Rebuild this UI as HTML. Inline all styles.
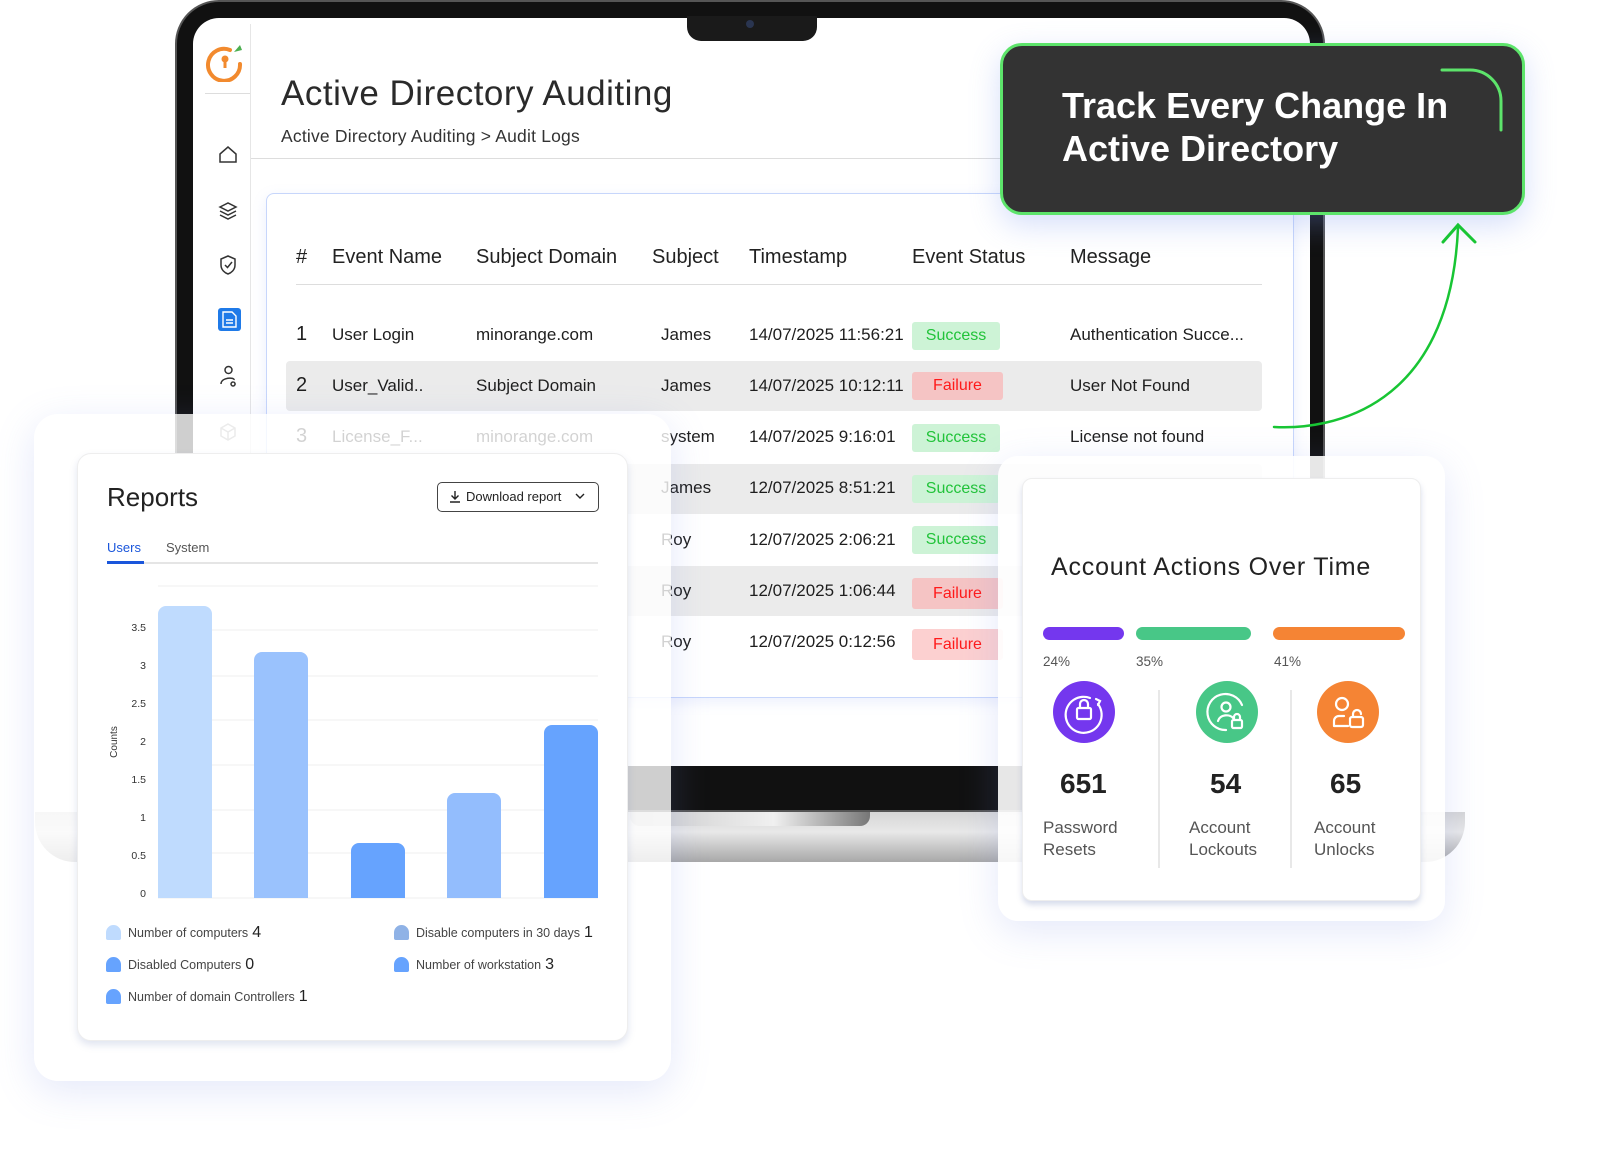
<!DOCTYPE html>
<html><head><meta charset="utf-8"><style>
*{margin:0;padding:0;box-sizing:border-box}
body{width:1599px;height:1150px;background:#fff;position:relative;overflow:hidden;font-family:"Liberation Sans",sans-serif;color:#222}
.a{position:absolute}
.t{position:absolute;white-space:nowrap}
.row{position:absolute;left:286px;width:976px;height:50px;background:#ebebeb;border-radius:4px}
.cell{position:absolute;font-size:17px;color:#1e1e1e;white-space:nowrap}
.b{position:absolute;left:912px;height:28px;border-radius:3px;font-size:16px;text-align:center;line-height:28px}
.s{width:88px;background:#cdf3d6;color:#22c33a}
.f{width:91px;background:#f5c4c4;color:#ff1a1a}
.leg{position:absolute;font-size:12.5px;color:#444;white-space:nowrap}
.leg i{display:inline-block;width:15px;height:15px;border-radius:8px 8px 2px 2px;vertical-align:-3px;margin-right:7px}
.leg b{font-weight:normal;font-size:16px;color:#222;margin-left:4px}
</style></head><body>

<!-- laptop base -->
<div class="a" style="left:35px;top:812px;width:1430px;height:50px;border-radius:0 0 40px 40px;background:linear-gradient(#d6d6d6,#e8e8e8 40%,#a8a8a8)"></div>
<div class="a" style="left:630px;top:812px;width:240px;height:14px;border-radius:0 0 10px 10px;background:linear-gradient(90deg,#c8c8c8,#f0f0f0 60%,#777)"></div>
<div class="a" style="left:175px;top:0;width:1150px;height:812px;border-radius:44px 44px 0 0;background:#111;border:2px solid #555"></div>
<div class="a" style="left:193px;top:18px;width:1117px;height:748px;border-radius:26px 26px 0 0;background:#fff"></div>
<div class="a" style="left:687px;top:16px;width:130px;height:25px;border-radius:0 0 14px 14px;background:#1a1a1a"></div>
<div class="a" style="left:746px;top:20px;width:8px;height:8px;border-radius:4px;background:#2a3550"></div>

<!-- sidebar -->
<div class="a" style="left:250px;top:24px;width:1px;height:742px;background:#e6e6e6"></div>
<div class="a" style="left:205px;top:93px;width:45px;height:1px;background:#ddd"></div>
<svg class="a" style="left:204px;top:42px" width="42" height="40" viewBox="0 0 42 40"><path d="M26 8 A16 16 0 1 0 36 22" fill="none" stroke="#f28a2e" stroke-width="4" stroke-linecap="round"/><circle cx="21" cy="17" r="3.5" fill="#f28a2e"/><rect x="19.5" y="18" width="3" height="8" fill="#f28a2e"/><path d="M30 10 L36 3 L38 8 Z" fill="#4caf50"/></svg>
<svg class="a" style="left:217px;top:144px" width="22" height="300" viewBox="0 0 22 300" fill="none" stroke="#333" stroke-width="1.5">
<path d="M3 10 L11 3 L19 10 V18 H3 Z"/>
<path d="M3 63 L11 59 L19 63 L11 67 Z M3 67 L11 71 L19 67 M3 71 L11 75 L19 71"/>
<path d="M11 112 L18 115 V121 C18 126 14 129 11 130 C8 129 4 126 4 121 V115 Z M8 121 L10.5 123.5 L15 118"/>
<path d="M8 226 a3.5 3.5 0 1 0 7 0 a3.5 3.5 0 1 0 -7 0 M4 240 C4 233 18 233 17 236 M16 238 a2 2 0 1 0 0.1 0"/>
<path d="M11 280 L18 284 V292 L11 296 L4 292 V284 Z M4 284 L11 288 L18 284 M11 288 V296" stroke="#999"/>
</svg>
<div class="a" style="left:218px;top:308px;width:23px;height:23px;border-radius:3px;background:#1f7ae8"></div>
<svg class="a" style="left:222px;top:311px" width="15" height="17" viewBox="0 0 15 17" fill="none" stroke="#fff" stroke-width="1.4"><path d="M1 1 H10 L14 5 V16 H1 Z M4 9 H11 M4 12 H11"/></svg>

<!-- header -->
<div class="t" style="left:281px;top:74px;font-size:35px;color:#2a2a2a;letter-spacing:0.5px">Active Directory Auditing</div>
<div class="t" style="left:281px;top:126px;font-size:17.5px;color:#333;letter-spacing:0.2px">Active Directory Auditing &gt; Audit Logs</div>
<div class="a" style="left:251px;top:158px;width:1059px;height:1px;background:#ddd"></div>

<!-- table card -->
<div class="a" style="left:266px;top:193px;width:1028px;height:505px;border:1.5px solid #c7d6fb;border-radius:8px;background:#fff;box-shadow:0 4px 14px rgba(120,150,240,.15)"></div>
<div class="t" style="left:296px;top:246px;font-size:20px">#</div>
<div class="t" style="left:332px;top:246px;font-size:20px">Event Name</div>
<div class="t" style="left:476px;top:246px;font-size:20px">Subject Domain</div>
<div class="t" style="left:652px;top:246px;font-size:20px">Subject</div>
<div class="t" style="left:749px;top:246px;font-size:20px">Timestamp</div>
<div class="t" style="left:912px;top:246px;font-size:20px">Event Status</div>
<div class="t" style="left:1070px;top:246px;font-size:20px">Message</div>
<div class="a" style="left:296px;top:284px;width:966px;height:1px;background:#ddd"></div>

<div class="row" style="top:361px"></div>
<div class="row" style="top:464px"></div>
<div class="row" style="top:566px"></div>

<div class="cell" style="left:296px;top:323px;font-size:20px">1</div>
<div class="cell" style="left:332px;top:325px">User Login</div>
<div class="cell" style="left:476px;top:325px">minorange.com</div>
<div class="cell" style="left:661px;top:325px">James</div>
<div class="cell" style="left:749px;top:325px">14/07/2025 11:56:21</div>
<div class="b s" style="top:322px">Success</div>
<div class="cell" style="left:1070px;top:325px">Authentication Succe...</div>

<div class="cell" style="left:296px;top:374px;font-size:20px">2</div>
<div class="cell" style="left:332px;top:376px">User_Valid..</div>
<div class="cell" style="left:476px;top:376px">Subject Domain</div>
<div class="cell" style="left:661px;top:376px">James</div>
<div class="cell" style="left:749px;top:376px">14/07/2025 10:12:11</div>
<div class="b f" style="top:372px">Failure</div>
<div class="cell" style="left:1070px;top:376px">User Not Found</div>

<div class="cell" style="left:296px;top:425px;font-size:20px">3</div>
<div class="cell" style="left:332px;top:427px">License_F...</div>
<div class="cell" style="left:476px;top:427px">minorange.com</div>
<div class="cell" style="left:661px;top:427px">system</div>
<div class="cell" style="left:749px;top:427px">14/07/2025 9:16:01</div>
<div class="b s" style="top:424px">Success</div>
<div class="cell" style="left:1070px;top:427px">License not found</div>

<div class="cell" style="left:661px;top:478px">James</div>
<div class="cell" style="left:749px;top:478px">12/07/2025 8:51:21</div>
<div class="b s" style="top:475px">Success</div>
<div class="cell" style="left:661px;top:530px">Roy</div>
<div class="cell" style="left:749px;top:530px">12/07/2025 2:06:21</div>
<div class="b s" style="top:526px">Success</div>
<div class="cell" style="left:661px;top:581px">Roy</div>
<div class="cell" style="left:749px;top:581px">12/07/2025 1:06:44</div>
<div class="b f" style="top:578px;height:31px;line-height:31px">Failure</div>
<div class="cell" style="left:661px;top:632px">Roy</div>
<div class="cell" style="left:749px;top:632px">12/07/2025 0:12:56</div>
<div class="b f" style="top:629px;height:31px;line-height:31px;background:#fcd0d0">Failure</div>

<!-- callout -->
<div class="a" style="left:1000px;top:43px;width:525px;height:172px;border-radius:22px;background:#333;border:3px solid #5de46b;box-shadow:0 10px 30px rgba(120,150,240,.3)"></div>
<div class="t" style="left:1062px;top:84px;font-size:36px;font-weight:bold;color:#fff;line-height:43px">Track Every Change In<br>Active Directory</div>
<svg class="a" style="left:1260px;top:60px" width="260" height="380" viewBox="1260 60 260 380" fill="none" stroke-linecap="round">
<path d="M1442 70 H1470 A31 31 0 0 1 1501 101 V130" stroke="#5de46b" stroke-width="3"/>
<path d="M1274 427 C1330 430 1450 410 1458 228" stroke="#18c534" stroke-width="2.5"/>
<path d="M1443 242 L1458 225 L1475 242" stroke="#18c534" stroke-width="3"/>
</svg>

<!-- left panel -->
<div class="a" style="left:34px;top:414px;width:637px;height:667px;border-radius:24px;background:rgba(255,255,255,.8);box-shadow:0 10px 40px rgba(120,140,230,.2)"></div>
<div class="a" style="left:77px;top:453px;width:551px;height:588px;border-radius:14px;background:#fff;border:1px solid #eee;box-shadow:0 4px 8px rgba(100,120,180,.2)"></div>
<div class="t" style="left:107px;top:482px;font-size:26px;color:#222">Reports</div>
<div class="a" style="left:437px;top:482px;width:162px;height:30px;border:1.5px solid #444;border-radius:5px;font-size:13px;color:#222;line-height:27px;padding-left:28px;white-space:nowrap">Download report</div>
<svg class="a" style="left:449px;top:489px" width="150" height="16" fill="none" stroke="#222" stroke-width="1.4"><path d="M6 2 V10 M2.5 6.5 L6 10 L9.5 6.5 M1 13 H11"/><path d="M127 5 L131 9 L135 5"/></svg>
<div class="t" style="left:107px;top:540px;font-size:13px;color:#1a56db">Users</div>
<div class="t" style="left:166px;top:540px;font-size:13px;color:#555">System</div>
<div class="a" style="left:107px;top:562px;width:491px;height:1.5px;background:#e5e5e5"></div>
<div class="a" style="left:107px;top:561px;width:37px;height:3px;background:#1a56db"></div>

<svg class="a" style="left:100px;top:580px" width="510" height="325" viewBox="100 580 510 325">
<g stroke="#efefef" stroke-width="1"><line x1="158" y1="586" x2="598" y2="586"/><line x1="158" y1="630" x2="598" y2="630"/><line x1="158" y1="676" x2="598" y2="676"/><line x1="158" y1="720" x2="598" y2="720"/><line x1="158" y1="765" x2="598" y2="765"/><line x1="158" y1="810" x2="598" y2="810"/><line x1="158" y1="853" x2="598" y2="853"/><line x1="158" y1="898" x2="598" y2="898"/></g>
<g font-size="10.5" fill="#333" text-anchor="end" font-family="Liberation Sans"><text x="146" y="631">3.5</text><text x="146" y="669">3</text><text x="146" y="707">2.5</text><text x="146" y="745">2</text><text x="146" y="783">1.5</text><text x="146" y="821">1</text><text x="146" y="859">0.5</text><text x="146" y="897">0</text></g>
<text x="117" y="742" font-size="10" fill="#333" transform="rotate(-90 117 742)" text-anchor="middle" font-family="Liberation Sans">Counts</text>
<path d="M158 898 V614 a8 8 0 0 1 8 -8 H204 a8 8 0 0 1 8 8 V898 Z" fill="#bfdbfe"/>
<path d="M254 898 V660 a8 8 0 0 1 8 -8 H300 a8 8 0 0 1 8 8 V898 Z" fill="#9ac2fd"/>
<path d="M351 898 V851 a8 8 0 0 1 8 -8 H397 a8 8 0 0 1 8 8 V898 Z" fill="#66a3fe"/>
<path d="M447 898 V801 a8 8 0 0 1 8 -8 H493 a8 8 0 0 1 8 8 V898 Z" fill="#93bdfd"/>
<path d="M544 898 V733 a8 8 0 0 1 8 -8 H590 a8 8 0 0 1 8 8 V898 Z" fill="#66a3fe"/>
</svg>
<div class="leg" style="left:106px;top:924px"><i style="background:#bfdbfe"></i>Number of computers<b>4</b></div>
<div class="leg" style="left:394px;top:924px"><i style="background:#8fb2e6"></i>Disable computers in 30 days<b>1</b></div>
<div class="leg" style="left:106px;top:956px"><i style="background:#66a3fe"></i>Disabled Computers<b>0</b></div>
<div class="leg" style="left:394px;top:956px"><i style="background:#66a3fe"></i>Number of workstation<b>3</b></div>
<div class="leg" style="left:106px;top:988px"><i style="background:#66a3fe"></i>Number of domain Controllers<b>1</b></div>

<!-- right panel -->
<div class="a" style="left:998px;top:456px;width:447px;height:465px;border-radius:20px;background:rgba(255,255,255,.9);box-shadow:0 10px 40px rgba(120,140,230,.2)"></div>
<div class="a" style="left:1022px;top:478px;width:399px;height:423px;border-radius:10px;background:#fff;border:1px solid #eee;box-shadow:0 4px 6px rgba(100,120,180,.25)"></div>
<div class="t" style="left:1051px;top:553px;font-size:25px;color:#222;letter-spacing:0.8px">Account Actions Over Time</div>
<div class="a" style="left:1043px;top:627px;width:81px;height:13px;border-radius:7px;background:#7437ee"></div>
<div class="a" style="left:1136px;top:627px;width:115px;height:13px;border-radius:7px;background:#48c787"></div>
<div class="a" style="left:1273px;top:627px;width:132px;height:13px;border-radius:7px;background:#f58434"></div>
<div class="t" style="left:1043px;top:654px;font-size:13.5px;color:#555">24%</div>
<div class="t" style="left:1136px;top:654px;font-size:13.5px;color:#555">35%</div>
<div class="t" style="left:1274px;top:654px;font-size:13.5px;color:#555">41%</div>
<div class="a" style="left:1158px;top:690px;width:2px;height:178px;background:#e8e8e8"></div>
<div class="a" style="left:1290px;top:690px;width:2px;height:178px;background:#e8e8e8"></div>
<svg class="a" style="left:1050px;top:680px" width="340" height="65" viewBox="1050 680 340 65" fill="none" stroke="#fff" stroke-width="2.2" stroke-linecap="round">
<circle cx="1084" cy="712" r="31" fill="#7437ee" stroke="none"/>
<circle cx="1227" cy="712" r="31" fill="#48c787" stroke="none"/>
<circle cx="1348" cy="712" r="31" fill="#f58434" stroke="none"/>
<path d="M1098 704 A18 18 0 1 1 1090 698 M1096 699 L1100 701 L1098 705"/>
<rect x="1077" y="708" width="14" height="11" rx="1.5"/><path d="M1080 708 V704 a4 4 0 0 1 8 0 V708"/>
<path d="M1242 705 A18 18 0 1 0 1226 730"/><circle cx="1226" cy="707" r="4.5"/><path d="M1218 721 C1220 714 1230 714 1233 718"/>
<rect x="1232" y="720" width="10" height="8" rx="1.5"/><path d="M1234 720 V717 a3 3 0 0 1 6 0 V720"/>
<circle cx="1342" cy="704" r="6"/><path d="M1334 726 V721 a5 5 0 0 1 5 -5 H1344 M1334 726 H1348"/>
<rect x="1350" y="717" width="13" height="10" rx="2"/><path d="M1353 717 V714 a4 4 0 0 1 8 0"/>
</svg>
<div class="t" style="left:1060px;top:768px;font-size:28px;font-weight:bold;color:#222">651</div>
<div class="t" style="left:1210px;top:768px;font-size:28px;font-weight:bold;color:#222">54</div>
<div class="t" style="left:1330px;top:768px;font-size:28px;font-weight:bold;color:#222">65</div>
<div class="t" style="left:1043px;top:817px;font-size:17px;color:#555;line-height:22px">Password<br>Resets</div>
<div class="t" style="left:1189px;top:817px;font-size:17px;color:#555;line-height:22px">Account<br>Lockouts</div>
<div class="t" style="left:1314px;top:817px;font-size:17px;color:#555;line-height:22px">Account<br>Unlocks</div>
</body></html>
